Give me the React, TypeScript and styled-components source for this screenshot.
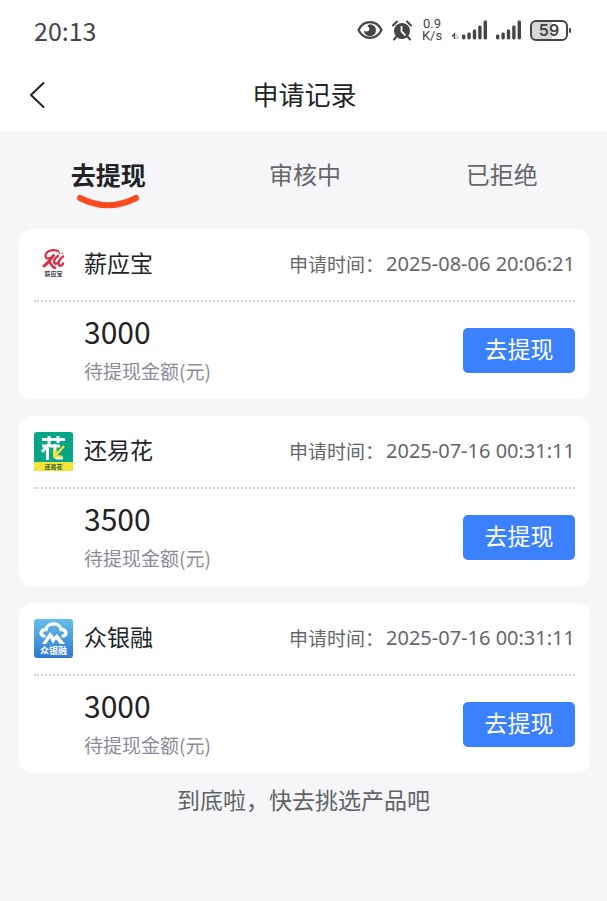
import React, { useState } from "react";
import styled, { createGlobalStyle } from "styled-components";

const GlobalStyle = createGlobalStyle`
  * { box-sizing: border-box; }
  body {
    margin: 0;
    background: #f6f6f9;
    color: #222326;
    font-family: "Noto Sans CJK SC", sans-serif;
  }
  button { font-family: inherit; border: 0; padding: 0; cursor: pointer; }
`;

const Page = styled.div`
  min-height: 100vh;
  background: #f6f6f9;
`;

const Top = styled.header`
  background: #ffffff;
`;

const StatusBar = styled.div`
  display: flex;
  align-items: center;
  justify-content: space-between;
  height: 60px;
  padding: 0 36px 0 34px;
  color: #454545;
`;

const Clock = styled.time`
  font-size: 25px;
  line-height: 30px;
`;

const StatusIcons = styled.div`
  display: flex;
  align-items: center;
  gap: 9px;

  svg { display: block; }
`;

const Speed = styled.div`
  width: 22px;
  font-family: Roboto, sans-serif;
  font-size: 13px;
  line-height: 12px;
  text-align: center;
`;

const Battery = styled.div`
  display: flex;
  align-items: center;

  &::after {
    content: "";
    width: 2px;
    height: 5px;
    margin-left: 1px;
    border-radius: 1px;
    background: #454545;
  }
`;

const BatteryLevel = styled.span`
  width: 38px;
  height: 21px;
  border: 2px solid #454545;
  border-radius: 6px;
  background: linear-gradient(90deg, #d8d8d8 59%, #ffffff 59%);
  font-family: Inter, sans-serif;
  font-size: 16px;
  font-weight: 600;
  line-height: 17px;
  text-align: center;
`;

const TitleBar = styled.div`
  display: grid;
  grid-template-columns: 60px 1fr 58px;
  align-items: start;
  height: 71px;
`;

const Back = styled.button`
  display: flex;
  align-items: center;
  height: 70px;
  padding-left: 28px;
  background: transparent;
`;

const Title = styled.h1`
  margin: 0;
  font-size: 26px;
  font-weight: 400;
  line-height: 68px;
  text-align: center;
`;

const Tabs = styled.nav`
  display: grid;
  grid-template-columns: repeat(3, 1fr);
  height: 98px;
  padding: 25px 7px 0 10px;
`;

const Tab = styled.button<{ $active: boolean }>`
  display: flex;
  flex-direction: column;
  align-items: center;
  gap: 2px;
  background: transparent;
  color: ${(p) => (p.$active ? "#222326" : "#66676a")};
  font-size: ${(p) => (p.$active ? 25 : 24)}px;
  font-weight: ${(p) => (p.$active ? 700 : 400)};
  line-height: 36px;
`;

const Cards = styled.main`
  display: grid;
  gap: 17px;
  padding: 0 17px 0 19px;
`;

const Card = styled.article`
  padding: 0 15px;
  border-radius: 13px;
  background: #ffffff;
`;

const CardHead = styled.div`
  display: flex;
  align-items: center;
  height: 71px;

  svg { display: block; flex: none; }
`;

const Name = styled.h2`
  flex: 1;
  margin: 0 0 0 11px;
  padding-bottom: 5px;
  font-size: 23px;
  font-weight: 400;
  line-height: 32px;
`;

const Applied = styled.div`
  display: flex;
  gap: 2px;
  padding-bottom: 2px;
  color: #66676a;
  font-size: 19px;
  line-height: 28px;
  white-space: nowrap;

  time {
    font-family: "Noto Sans", sans-serif;
    font-size: 20px;
  }
`;

const Divider = styled.hr`
  margin: 0;
  border: 0;
  border-top: 2px dotted #d3d3d5;
`;

const CardBody = styled.div`
  display: flex;
  align-items: center;
  justify-content: space-between;
  height: 97px;
  padding-left: 50px;
`;

const Amount = styled.div`
  font-size: 30px;
  line-height: 40px;
`;

const AmountLabel = styled.div`
  color: #8a8c96;
  font-size: 19px;
  line-height: 40px;
`;

const Withdraw = styled.button`
  width: 112px;
  height: 45px;
  padding-bottom: 5px;
  border-radius: 5px;
  background: #3a80ff;
  color: #ffffff;
  font-size: 23px;
  line-height: 40px;
`;

const EndNote = styled.p`
  margin: 0;
  padding-top: 8px;
  color: #626366;
  font-size: 23px;
  line-height: 36px;
  text-align: center;
`;

const LogoText = styled.text`
  font-family: "Noto Sans CJK SC", sans-serif;
  font-weight: 700;
  text-anchor: middle;
`;

function EyeIcon() {
  return (
    <svg width="26" height="20" viewBox="0 0 26 20" aria-hidden="true">
      <path d="M1.5 10C4 5 8 2.2 13 2.2S22 5 24.5 10C22 15 18 17.8 13 17.8S4 15 1.5 10Z" fill="none" stroke="#454545" strokeWidth="2.2" />
      <path d="M13 4.2a6 6 0 1 1-6 6c1.2 1.8 3.7 1.8 4.9.4 1.2-1.5.6-3.7-1.7-4.4.8-1 1.6-2 2.8-2Z" fill="#454545" />
    </svg>
  );
}

function AlarmIcon() {
  return (
    <svg width="20" height="21" viewBox="0 0 20 21" aria-hidden="true">
      <circle cx="10" cy="11" r="8" fill="#454545" />
      <path d="M1 5.5 5 1.5M19 5.5 15 1.5M4.5 16.5 2 19.5M15.5 16.5 18 19.5" stroke="#454545" strokeWidth="2" strokeLinecap="round" />
      <path d="M9.5 6v5.5l4 4" fill="none" stroke="#fff" strokeWidth="1.8" />
    </svg>
  );
}

function BarsIcon({ data = false }: { data?: boolean }) {
  const left = data ? 10 : 0;
  return (
    <svg width={left + 25} height="20" viewBox={`0 0 ${left + 25} 20`} aria-hidden="true">
      {data && (
        <>
          <path d="M0 16.5 2.5 14v5" fill="none" stroke="#454545" strokeWidth="1.4" />
          <path d="M5 14v5l2-2" fill="none" stroke="#b5b5b5" strokeWidth="1" />
        </>
      )}
      {[5, 7, 10, 14, 19].map((h, i) => (
        <rect key={h} x={left + i * 5.4} y={19.5 - h} width="3.4" height={h} rx="1.4" fill="#454545" />
      ))}
    </svg>
  );
}

function Smile() {
  return (
    <svg width="62" height="16" viewBox="0 0 62 16" aria-hidden="true">
      <path d="M3 4Q31 18.500 59 4" fill="none" stroke="#fb4a20" strokeWidth="6" strokeLinecap="round" />
    </svg>
  );
}

function XinyingbaoLogo() {
  return (
    <svg width="39" height="39" viewBox="0 0 39 39" role="img" aria-label="薪应宝">
      <g fill="none" stroke="#dc3048" strokeLinecap="round">
        <path d="M24 6C18 3.500 11 6.500 11.500 11.500c.3 2 2.500 2.500 4 1.500" strokeWidth="2.2" />
        <path d="M19.500 10.500C17 13 14.500 18 10 21" strokeWidth="3" />
        <path d="M15.500 16.500C16.500 19 18 21.500 21 23" strokeWidth="2.6" />
        <path d="M24 11C20.500 13 19 17 21 18.500c1 .6 2 0 3-1" strokeWidth="2.4" />
        <path d="M29 11.500C25 14 23.500 19 25.500 20.500c1.500.8 3-.5 3.500-2" strokeWidth="2.4" />
      </g>
      <g fill="#dc3048">
        <circle cx="25.500" cy="8" r="1" />
        <circle cx="28.500" cy="8.500" r="0.8" />
      </g>
      <LogoText x="19.5" y="31" fontSize="6" fill="#45474b">薪应宝</LogoText>
    </svg>
  );
}

function HuanyihuaLogo() {
  return (
    <svg width="39" height="39" viewBox="0 0 39 39" role="img" aria-label="还易花">
      <rect width="39" height="39" rx="3" fill="#05a587" />
      <path d="M0 30h39v6a3 3 0 0 1-3 3H3a3 3 0 0 1-3-3Z" fill="#f6e338" />
      <g fill="none" stroke="#fff" strokeWidth="3">
        <path d="M8 7.5h23M15 4v7M24 4v7M16 11 8 20M13.5 16v12M8 14h18M21 12v11q0 3 3 3h5" />
      </g>
      <path d="M30 14 21 24M20.500 17v7.500h7" fill="none" stroke="#f6e338" strokeWidth="2.6" />
      <LogoText x="19.5" y="36.5" fontSize="6" fill="#285f3c">还易花</LogoText>
    </svg>
  );
}

function ZhongyinrongLogo() {
  return (
    <svg width="39" height="39" viewBox="0 0 39 39" role="img" aria-label="众银融">
      <defs>
        <linearGradient id="sky" x1="0" y1="0" x2="0" y2="1">
          <stop offset="0" stopColor="#65bfea" />
          <stop offset="1" stopColor="#3178d2" />
        </linearGradient>
      </defs>
      <rect width="39" height="39" rx="3" fill="url(#sky)" />
      <path d="M10 17C5 16 7 10 12 10.5C13 3 26 3 27 10.5C32 10 34 16 29 17" fill="none" stroke="#fff" strokeWidth="3.4" strokeLinecap="round" />
      <path d="M8 25 16 13l4 5 3-3 8 10h-5l-4-5-3 5-3-6-4 6Z" fill="#fff" />
      <LogoText x="19.5" y="35" fontSize="9" fill="#fff">众银融</LogoText>
    </svg>
  );
}

const tabs = ["去提现", "审核中", "已拒绝"];

const records = [
  { name: "薪应宝", time: "2025-08-06 20:06:21", amount: 3000, Logo: XinyingbaoLogo },
  { name: "还易花", time: "2025-07-16 00:31:11", amount: 3500, Logo: HuanyihuaLogo },
  { name: "众银融", time: "2025-07-16 00:31:11", amount: 3000, Logo: ZhongyinrongLogo },
];

export default function App() {
  const [active, setActive] = useState(tabs[0]);

  return (
    <Page>
      <GlobalStyle />
      <Top>
        <StatusBar>
          <Clock>20:13</Clock>
          <StatusIcons>
            <EyeIcon />
            <AlarmIcon />
            <Speed>0.9 K/s</Speed>
            <BarsIcon data />
            <BarsIcon />
            <Battery><BatteryLevel>59</BatteryLevel></Battery>
          </StatusIcons>
        </StatusBar>
        <TitleBar>
          <Back type="button" aria-label="返回">
            <svg width="18" height="28" viewBox="0 0 18 28" fill="none" aria-hidden="true">
              <path d="M15.5 2 3 14l12.5 12" stroke="#222326" strokeWidth="2" strokeLinecap="round" strokeLinejoin="round" />
            </svg>
          </Back>
          <Title>申请记录</Title>
        </TitleBar>
      </Top>
      <Tabs>
        {tabs.map((tab) => (
          <Tab key={tab} type="button" $active={tab === active} aria-pressed={tab === active} onClick={() => setActive(tab)}>
            {tab}
            {tab === active && <Smile />}
          </Tab>
        ))}
      </Tabs>
      <Cards>
        {records.map(({ name, time, amount, Logo }) => (
          <Card key={name}>
            <CardHead>
              <Logo />
              <Name>{name}</Name>
              <Applied>申请时间：<time>{time}</time></Applied>
            </CardHead>
            <Divider />
            <CardBody>
              <div>
                <Amount>{amount}</Amount>
                <AmountLabel>待提现金额(元)</AmountLabel>
              </div>
              <Withdraw type="button">去提现</Withdraw>
            </CardBody>
          </Card>
        ))}
      </Cards>
      <EndNote>到底啦，快去挑选产品吧</EndNote>
    </Page>
  );
}
